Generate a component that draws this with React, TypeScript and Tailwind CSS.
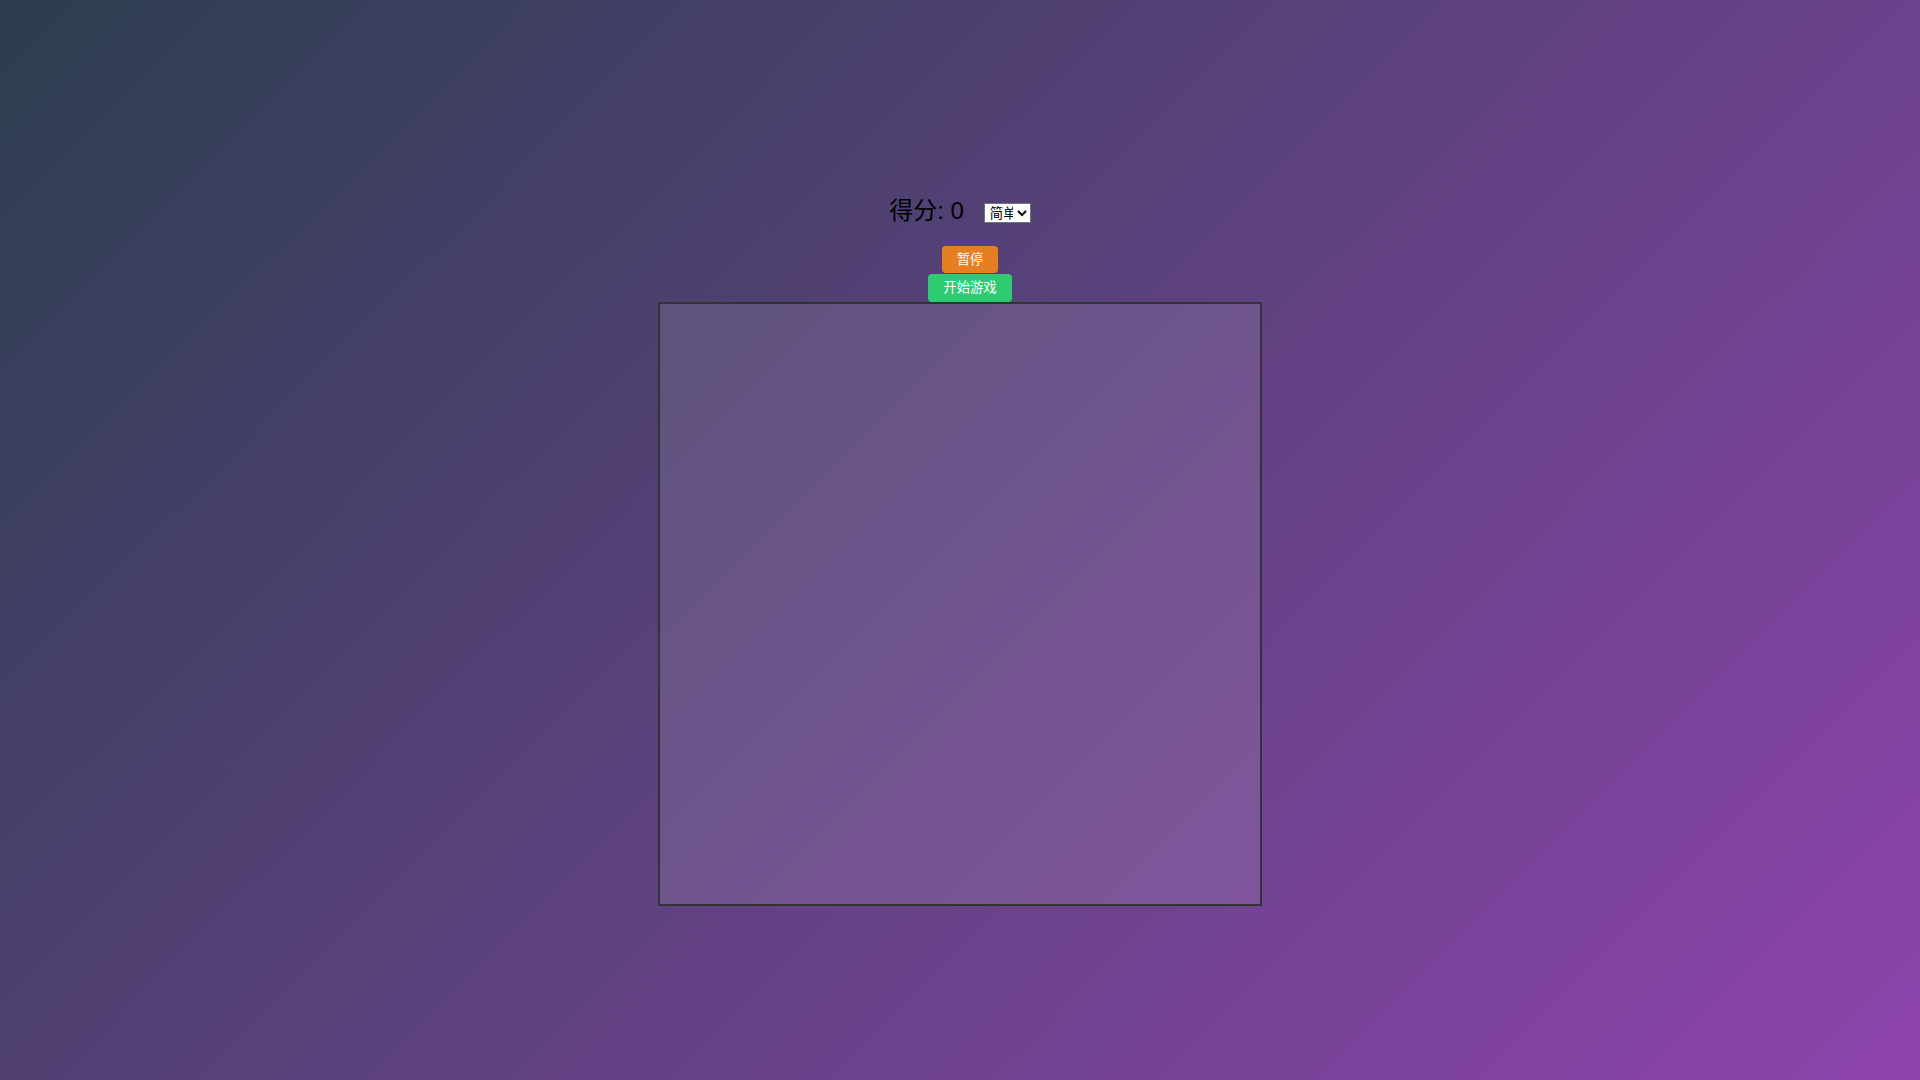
export default function App() {
  return (
    <div
      className="min-h-screen w-full bg-[linear-gradient(135deg,#2c3e50,#8e44ad)] text-black"
      style={{ fontFamily: '"Liberation Sans", Arial, "Noto Sans CJK SC", sans-serif' }}
    >
      <div className="flex flex-col items-center pt-[196px]">
        <div className="flex h-[30px] items-center">
          <span className="text-[24px] leading-[30px]">得分: 0</span>
          <select className="ml-[20px] mt-[4px] h-[20px] w-[47px] border border-gray-500 bg-white px-[1px] py-0 text-[13.33px] leading-none text-black">
            <option>简单</option>
            <option>中等</option>
            <option>困难</option>
          </select>
        </div>
        <div className="mt-[20px] flex flex-col items-center pl-[20px]">
          <button className="rounded-[4px] bg-[#e67e22] px-[15px] py-[5px] text-[13.33px] leading-[17px] text-white">
            暂停
          </button>
          <button className="mt-[1px] rounded-[4px] bg-[#2ecc71] px-[15px] py-[5px] text-[13.33px] leading-[18px] text-white">
            开始游戏
          </button>
        </div>
        <canvas width={600} height={600} className="box-content block h-[600px] w-[600px] border-2 border-[#333] bg-white/10" />
      </div>
    </div>
  );
}
